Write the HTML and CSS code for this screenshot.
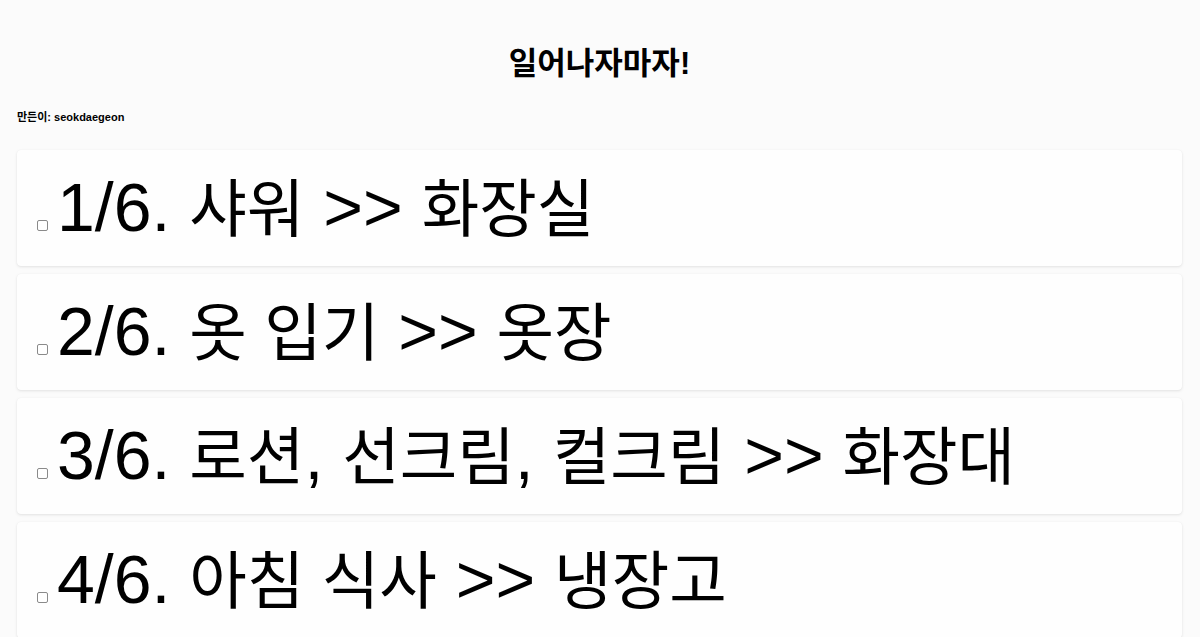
FILE: index.html
```html
<!DOCTYPE html>
<html lang="ko">
<head>
<meta charset="utf-8">
<title>일어나자마자!</title>
<link rel="stylesheet" href="styles.css">
</head>
<body>
<header class="header">
  <h1 class="title">일어나자마자!</h1>
  <h6 class="byline">만든이: seokdaegeon</h6>
</header>
<main class="list">
  <div class="card">
    <label class="task"><input type="checkbox" class="check">1/6. <span class="ko">샤워</span> &gt;&gt; <span class="ko">화장실</span></label>
  </div>
  <div class="card">
    <label class="task"><input type="checkbox" class="check">2/6. <span class="ko">옷 입기</span> &gt;&gt; <span class="ko">옷장</span></label>
  </div>
  <div class="card">
    <label class="task"><input type="checkbox" class="check">3/6. <span class="ko">로션</span>, <span class="ko">선크림</span>, <span class="ko">컬크림</span> &gt;&gt; <span class="ko">화장대</span></label>
  </div>
  <div class="card">
    <label class="task"><input type="checkbox" class="check">4/6. <span class="ko">아침 식사</span> &gt;&gt; <span class="ko">냉장고</span></label>
  </div>
</main>
</body>
</html>
```

FILE: styles.css
```css
html, body {
  margin: 0;
  padding: 0;
  background: #fbfbfb;
  color: #000;
  font-family: "Liberation Sans", "Noto Sans CJK KR", sans-serif;
}

.header {
  padding: 45px 18px 0 17px;
}

.title {
  margin: 0;
  text-align: center;
  font-size: 31px;
  line-height: 37px;
  font-weight: 700;
}

.byline {
  margin: 29px 0 0;
  font-size: 11px;
  line-height: 13px;
  font-weight: 700;
}

.list {
  display: flex;
  flex-direction: column;
  gap: 8px;
  padding: 26px 18px 20px 17px;
}

.card {
  box-sizing: border-box;
  height: 116px;
  padding: 23px 16px 25px;
  background: #fefefe;
  border-radius: 4px;
  box-shadow: 0 1px 3px rgba(0, 0, 0, 0.1), 0 0 1px rgba(0, 0, 0, 0.06);
}

.task {
  display: block;
  font-size: 68px;
  line-height: 1;
  white-space: nowrap;
}

.ko {
  font-size: 0.92em;
}

.check {
  appearance: none;
  -webkit-appearance: none;
  box-sizing: border-box;
  width: 11px;
  height: 11px;
  margin: 0 9px 0 4px;
  border: 1px solid #8a8a8a;
  border-radius: 2px;
  background: #fff;
  vertical-align: baseline;
}
```
